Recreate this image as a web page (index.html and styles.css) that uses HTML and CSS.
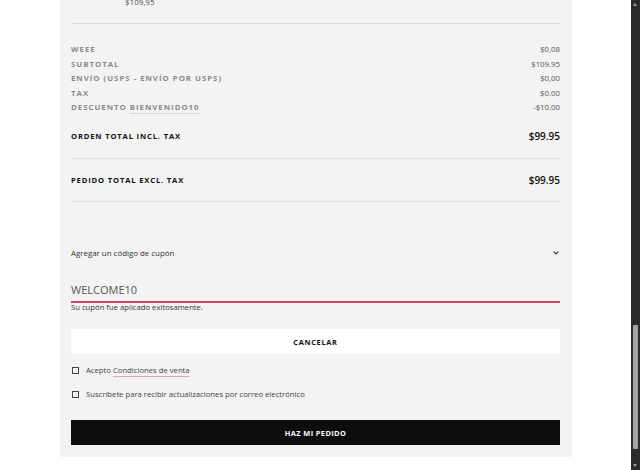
FILE: index.html
```html
<!DOCTYPE html>
<html lang="es">
<head>
<meta charset="utf-8">
<title>Pedido</title>
<link rel="stylesheet" href="styles.css">
</head>
<body>
<div class="panel">
  <div class="item-tail"><span class="item-price">$109,95</span></div>
  <div class="totals">
    <div class="row"><span class="label">WEEE</span><span class="val">$0,08</span></div>
    <div class="row"><span class="label">Subtotal</span><span class="val">$109.95</span></div>
    <div class="row"><span class="label">Envío (USPS - Envío por USPS)</span><span class="val">$0,00</span></div>
    <div class="row"><span class="label">Tax</span><span class="val">$0.00</span></div>
    <div class="row"><span class="label">Descuento <span class="code">BIENVENIDO10</span></span><span class="val">-$10.00</span></div>
  </div>
  <div class="grand incl"><span class="glabel">Orden Total Incl. Tax</span><span class="gval">$99.95</span></div>
  <div class="grand excl"><span class="glabel">Pedido Total Excl. Tax</span><span class="gval">$99.95</span></div>

  <div class="coupon-head"><span>Agregar un código de cupón</span>
    <svg class="chev" width="6" height="4" viewBox="0 0 6 4"><path d="M0.6 0.6 L3 3 L5.4 0.6" fill="none" stroke="#333" stroke-width="1.1"/></svg>
  </div>
  <div class="coupon-input">WELCOME10</div>
  <div class="coupon-msg">Su cupón fue aplicado exitosamente.</div>
  <div class="btn-cancel">Cancelar</div>

  <label class="check"><span class="box"></span><span>Acepto <span class="link">Condiciones de venta</span></span></label>
  <label class="check second"><span class="box"></span><span>Suscríbete para recibir actualizaciones por correo electrónico</span></label>

  <div class="btn-order">Haz mi pedido</div>
</div>
<div class="scrollbar">
  <span class="arrow up"></span>
  <span class="thumb"></span>
  <span class="arrow down"></span>
</div>
</body>
</html>
```
FILE: styles.css
```css
html, body {
  margin: 0;
  padding: 0;
  background: #ffffff;
}
body {
  font-family: "Open Sans", "Liberation Sans", sans-serif;
  color: #333;
  height: 470px;
  overflow: hidden;
}
.panel {
  margin-left: 60px;
  width: 489px;
  background: #f3f3f3;
  padding: 0 12px 12px 11px;
}
.item-tail {
  display: flow-root;
  height: 23px;
  border-bottom: 1px solid #dedede;
  padding-left: 54px;
}
.item-price {
  display: block;
  font-size: 8px;
  line-height: 8px;
  margin-top: -2px;
  color: #555;
}
.totals {
  padding-top: 18px;
}
.row {
  height: 14.5px;
  display: flex;
  align-items: center;
  justify-content: space-between;
}
.label {
  font-size: 7.8px;
  font-weight: 700;
  letter-spacing: 1px;
  text-transform: uppercase;
  color: #8a8a8a;
}
.code {
  border-bottom: 1px solid #d6d6d6;
  padding-bottom: 1px;
}
.val {
  font-size: 7.8px;
  color: #555;
}
.grand {
  display: flex;
  align-items: center;
  justify-content: space-between;
  border-bottom: 1px solid #dedede;
}
.incl { height: 43.5px; }
.excl { height: 42px; }
.glabel {
  font-size: 7.6px;
  font-weight: 700;
  letter-spacing: 0.85px;
  text-transform: uppercase;
  color: #111;
}
.gval {
  font-size: 10px;
  font-weight: 600;
  color: #111;
}
.coupon-head {
  margin-top: 41px;
  height: 20px;
  display: flex;
  align-items: center;
  justify-content: space-between;
  font-size: 7.9px;
  color: #333;
}
.chev {
  margin-right: 1px;
}
.coupon-input {
  margin-top: 14px;
  display: flex;
  align-items: center;
  border-bottom: 2px solid #c8475e;
  font-size: 11px;
  color: #555;
  box-sizing: border-box;
  height: 26px;
}
.coupon-msg {
  font-size: 7.7px;
  line-height: 9px;
  color: #333;
}
.btn-cancel {
  margin-top: 17px;
  height: 25px;
  background: #ffffff;
  display: flex;
  align-items: center;
  justify-content: center;
  font-size: 7.4px;
  font-weight: 700;
  letter-spacing: 0.7px;
  text-transform: uppercase;
  color: #111;
}
.check {
  margin-top: 8px;
  height: 16px;
  display: flex;
  align-items: center;
  font-size: 7.7px;
  color: #444;
}
.box {
  width: 5px;
  height: 5px;
  border: 1px solid #444;
  margin: 0 7px 0 1px;
  flex: none;
}
.link {
  border-bottom: 1px solid #e4a6b3;
  padding-bottom: 1px;
}
.btn-order {
  margin-top: 18px;
  height: 25px;
  background: #0d0d0d;
  display: flex;
  align-items: center;
  justify-content: center;
  font-size: 7.4px;
  font-weight: 700;
  letter-spacing: 0.4px;
  text-transform: uppercase;
  color: #ffffff;
}
.scrollbar {
  position: fixed;
  top: 0;
  right: 0;
  width: 9px;
  height: 470px;
  background: #2b2b2b;
}
.thumb {
  position: absolute;
  left: 2px;
  top: 325px;
  width: 5px;
  height: 124px;
  background: #a3a3a3;
  border-radius: 1px;
}
.arrow {
  position: absolute;
  left: 2px;
  width: 0;
  height: 0;
  border-left: 2.5px solid transparent;
  border-right: 2.5px solid transparent;
}
.arrow.up {
  top: 3px;
  border-bottom: 3px solid #9a9a9a;
}
.arrow.down {
  bottom: 3px;
  border-top: 3px solid #9a9a9a;
}
```
